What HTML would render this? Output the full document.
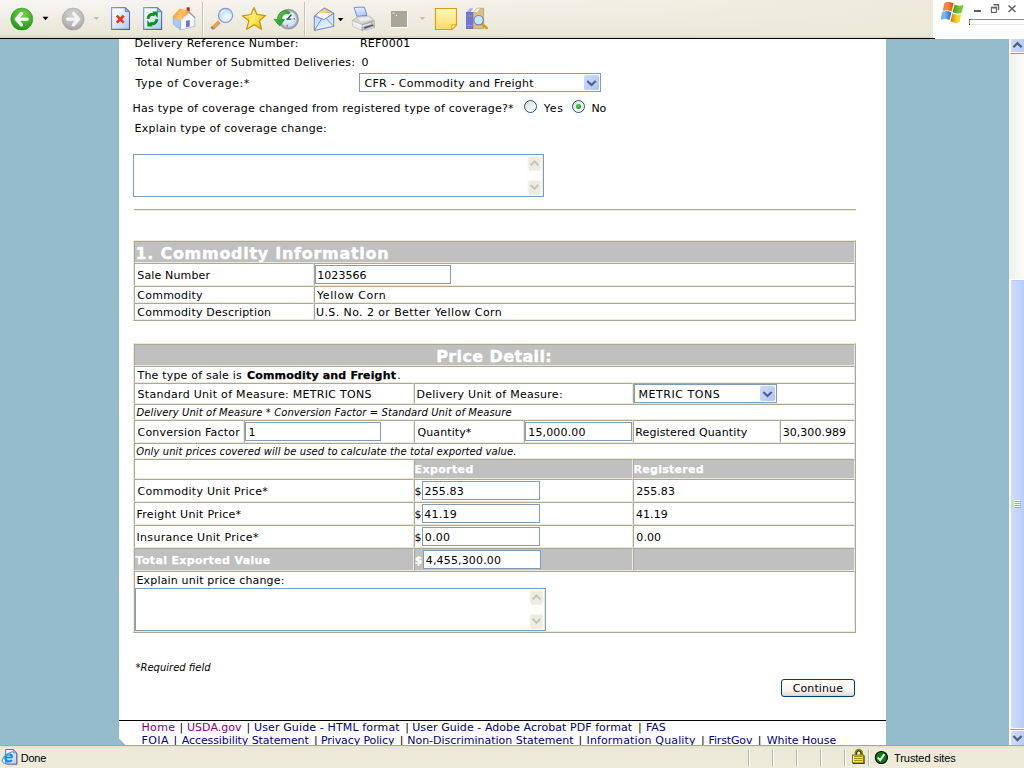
<!DOCTYPE html>
<html>
<head>
<meta charset="utf-8">
<title>Delivery</title>
<style>
html,body{margin:0;padding:0;width:1024px;height:768px;overflow:hidden;background:#93bbcc;}
body{position:relative;font-family:"DejaVu Sans","Liberation Sans",sans-serif;font-size:11px;color:#000;}
.abs{position:absolute;}
.t{position:absolute;white-space:pre;line-height:13px;height:13px;font:11px "DejaVu Sans","Liberation Sans",sans-serif;line-height:13px;}
.t.b{font-weight:bold;-webkit-text-stroke:0.25px;}
.t.h{font-weight:bold;font-size:16px;line-height:19px;height:19px;-webkit-text-stroke:0.4px #fff;}
.t.i{font-style:italic;font-size:10px;}
.t.s{font-family:"Liberation Sans","DejaVu Sans",sans-serif;}
#toolbar{left:0;top:0;width:933px;height:38px;background:linear-gradient(transparent 0,transparent 36px,#d9d5c1 37px,#d9d5c1 38px),linear-gradient(90deg,rgba(238,234,218,0) 0,rgba(238,234,218,0.35) 500px,rgba(238,234,218,0.95) 900px),linear-gradient(#f6f5f1 0,#f3f2ec 10px,#efede2 20px,#eae7d8 33px,#e4e0ce 37px);}
#tbline{left:0;top:38px;width:935px;height:1px;background:#000;}
#tbright{left:933px;top:0;width:91px;height:39px;background:#fff;}
#content{left:119px;top:39px;width:767px;height:706px;background:#fff;}
#status{left:0;top:745px;width:1024px;height:23px;background:linear-gradient(#a9a692 0,#a9a692 1px,#dedbc8 1px,#e8e5d4 2px,#ece9d8 4px,#eeebdb 100%);}
#sbar{left:1009px;top:39px;width:15px;height:706px;background:linear-gradient(90deg,#f1efe8,#fcfcf8);}
table.g{position:absolute;border-collapse:separate;border-spacing:0;border:1px solid;border-color:#ece9d8 #aca899 #aca899 #ece9d8;table-layout:fixed;}
table.g td{border:1px solid;border-color:#aca899 #ece9d8 #ece9d8 #aca899;padding:0;}
td.h{background:#c0c0c0;}
.in{position:absolute;box-sizing:border-box;border:1px solid #7f9db9;background:#fff;}
#btn{box-sizing:border-box;border:1px solid #003c74;border-radius:3px;background:linear-gradient(#fff,#f4f3ee 70%,#e4e1d6 90%,#d6d0c5);}
</style>
</head>
<body>
<div id="toolbar" class="abs"></div>
<div id="tbright" class="abs"></div>
<svg class="abs" style="left:0;top:0" width="1024" height="38" viewBox="0 0 1024 38">
<defs>
<radialGradient id="gG" cx="0.55" cy="0.3" r="0.75"><stop offset="0" stop-color="#7ed04f"/><stop offset="0.6" stop-color="#3fae2a"/><stop offset="1" stop-color="#1d8a1c"/></radialGradient>
<radialGradient id="gS" cx="0.5" cy="0.3" r="0.75"><stop offset="0" stop-color="#d2d2d2"/><stop offset="0.6" stop-color="#bcbcbc"/><stop offset="1" stop-color="#9c9c9c"/></radialGradient>
<linearGradient id="pg" x1="0" y1="0" x2="1" y2="1"><stop offset="0" stop-color="#ffffff"/><stop offset="0.35" stop-color="#eef5ff"/><stop offset="1" stop-color="#a4c8f6"/></linearGradient>
<linearGradient id="nt" x1="0" y1="0" x2="0" y2="1"><stop offset="0" stop-color="#fffcb8"/><stop offset="1" stop-color="#ffd868"/></linearGradient>
<linearGradient id="st" x1="0" y1="0" x2="1" y2="0.600"><stop offset="0" stop-color="#fff480"/><stop offset="0.350" stop-color="#f8d420"/><stop offset="0.550" stop-color="#fff070"/><stop offset="1" stop-color="#ecbc18"/></linearGradient>
<radialGradient id="ln" cx="0.620" cy="0.650" r="0.700"><stop offset="0" stop-color="#ffffff"/><stop offset="0.450" stop-color="#d4f0fe"/><stop offset="1" stop-color="#a8d8fa"/></radialGradient>
<linearGradient id="rf" x1="0" y1="0.3" x2="1" y2="0.7"><stop offset="0" stop-color="#f89030"/><stop offset="0.5" stop-color="#ffc468"/><stop offset="1" stop-color="#f08c28"/></linearGradient>
<linearGradient id="hw" x1="0" y1="0" x2="1" y2="1"><stop offset="0" stop-color="#d4e6f8"/><stop offset="0.5" stop-color="#ffffff"/><stop offset="1" stop-color="#e4ecf8"/></linearGradient>
<radialGradient id="cf" cx="0.4" cy="0.35" r="0.8"><stop offset="0" stop-color="#ffffff"/><stop offset="0.5" stop-color="#d4ecfa"/><stop offset="1" stop-color="#b0dcf6"/></radialGradient>
<linearGradient id="ga" x1="0" y1="0" x2="1" y2="1"><stop offset="0" stop-color="#70d058"/><stop offset="0.5" stop-color="#3cac30"/><stop offset="1" stop-color="#208c20"/></linearGradient>
<linearGradient id="ev" x1="0" y1="0" x2="0.300" y2="1"><stop offset="0" stop-color="#a8d8fc"/><stop offset="0.600" stop-color="#c4e6fd"/><stop offset="1" stop-color="#e8f4fe"/></linearGradient>
<linearGradient id="lt" x1="0" y1="0" x2="1" y2="0.200"><stop offset="0" stop-color="#fff0a0"/><stop offset="0.500" stop-color="#fcd070"/><stop offset="1" stop-color="#f8a850"/></linearGradient>
<linearGradient id="pp" x1="0" y1="0" x2="0.300" y2="1"><stop offset="0" stop-color="#f4f8ff"/><stop offset="1" stop-color="#a4ccf8"/></linearGradient>
<linearGradient id="pb" x1="0" y1="0" x2="1" y2="1"><stop offset="0" stop-color="#7c9cdc"/><stop offset="1" stop-color="#585898"/></linearGradient>
<linearGradient id="f1" x1="0" y1="0" x2="1" y2="0"><stop offset="0" stop-color="#f87830"/><stop offset="0.400" stop-color="#ff8c40"/><stop offset="1" stop-color="#e84410"/></linearGradient>
<linearGradient id="f2" x1="0" y1="0" x2="1" y2="0"><stop offset="0" stop-color="#4c9420"/><stop offset="0.600" stop-color="#78c830"/><stop offset="1" stop-color="#70cc20"/></linearGradient>
<linearGradient id="f3" x1="0" y1="0" x2="1" y2="0"><stop offset="0" stop-color="#60a8f0"/><stop offset="0.350" stop-color="#78c0fc"/><stop offset="1" stop-color="#2860b0"/></linearGradient>
<linearGradient id="f4" x1="0" y1="0" x2="1" y2="0"><stop offset="0" stop-color="#c47c08"/><stop offset="0.600" stop-color="#fcd028"/><stop offset="1" stop-color="#ffdc28"/></linearGradient>
</defs>
<!-- back -->
<circle cx="21.8" cy="19.1" r="11" fill="url(#gG)" stroke="#2a9a22" stroke-width="0.6"/>
<path d="M21.500 13.400L16.200 19.100L21.500 24.800M16.800 19.100H27.300" stroke="#fff" stroke-width="3.200" stroke-linecap="round" stroke-linejoin="round" fill="none"/>
<path d="M42.6 16.8h5.8l-2.9 3.4z" fill="#000"/>
<!-- forward -->
<circle cx="73.1" cy="19.1" r="11" fill="url(#gS)" stroke="#a6a6a6" stroke-width="0.6"/>
<path d="M73.400 13.400L78.700 19.100L73.400 24.800M78.100 19.100H67.600" stroke="#f4f4f4" stroke-width="3.200" stroke-linecap="round" stroke-linejoin="round" fill="none"/>
<path d="M93.6 16.9h5.6l-2.8 3.2z" fill="#c2bfb2"/>
<!-- stop -->
<path d="M111.600 7.600H125.300L129.500 11.800V29.400H111.600Z" fill="url(#pg)" stroke="url(#pb)" stroke-width="1.100"/>
<path d="M125.300 7.600V11.800H129.500Z" fill="#6cbcf8" stroke="#6870b4" stroke-width="0.700"/>
<path d="M116.8 15.6l7 7M123.8 15.6l-7 7" stroke="#f03818" stroke-width="2.7" stroke-linecap="butt"/>
<!-- refresh -->
<path d="M143.700 7.600H157.400L161.600 11.800V29.400H143.700Z" fill="url(#pg)" stroke="url(#pb)" stroke-width="1.100"/>
<path d="M157.400 7.600V11.800H161.600Z" fill="#6cbcf8" stroke="#6870b4" stroke-width="0.700"/>
<path d="M148.3 18.8a4.300 4.300 0 0 1 6.600-3.900" stroke="#0c9418" stroke-width="3" fill="none"/>
<path d="M152.200 11.500h5.500v6.500z" fill="#0c9418"/>
<path d="M156.700 19.200a4.300 4.300 0 0 1-6.600 3.900" stroke="#0c9418" stroke-width="3" fill="none"/>
<path d="M152.800 26.400h-5.500v-6.500z" fill="#0c9418"/>
<!-- home -->
<path d="M186.600 7.300h3v4.200h-3z" fill="#b42414"/>
<path d="M173.100 17.200l7.300 3.800v8.800l-7-5.600z" fill="#a4ccf2" stroke="#7c98d4" stroke-width="0.600"/>
<path d="M180.600 20.700l8.300-8l5.900 5.100v8.500l-13.900 3.600z" fill="url(#hw)" stroke="#9ca4d0" stroke-width="0.600"/>
<path d="M172.500 16.600l7.300-8.200l7.100 1.500l2.300 2.300l-10 8.500z" fill="url(#rf)"/>
<path d="M189 12l6.200 5.800" stroke="#a48c9c" stroke-width="1.100"/>
<path d="M186 20.800l3.800-0.900v6.600l-3.800 1z" fill="#7878b4"/>
<!-- sep -->
<path d="M202.5 2v34.5" stroke="#c8c5b4" stroke-width="1"/>
<path d="M203.5 2v34.5" stroke="#f8f7f0" stroke-width="1"/>
<!-- search -->
<path d="M219.500 22L212.300 28.800" stroke="#a098c8" stroke-width="3.600" stroke-linecap="butt"/>
<path d="M219.100 21.400L211.900 28.200" stroke="#f8a030" stroke-width="2.900" stroke-linecap="butt"/>
<path d="M212.800 27.300L211.500 28.600" stroke="#8c8478" stroke-width="2.900"/>
<circle cx="225.500" cy="15.400" r="7.100" fill="url(#ln)" stroke="#9094d4" stroke-width="1.200"/>
<path d="M221.300 12.600a5 5 0 0 1 3-2.300" stroke="#fff" stroke-width="1.300" fill="none" stroke-linecap="round"/>
<!-- star -->
<path d="M254 7.600L256.900 14.400L265.600 15.600L259.500 20.800L261.500 29.300L254.300 24.700L246.600 29.300L248.900 20.800L242.500 15.900L251.100 14.600Z" fill="url(#st)" stroke="#c8980c" stroke-width="1.300" stroke-linejoin="round"/>
<path d="M253.800 10.500L251.900 15.600L245.500 16.600" stroke="#fffbd0" stroke-width="1" fill="none" opacity="0.800"/>
<!-- history -->
<circle cx="288.500" cy="19.200" r="9.500" fill="#b4b4e0" stroke="#9c9ca0" stroke-width="1.800"/>
<circle cx="288.700" cy="19.200" r="7.600" fill="url(#cf)"/>
<path d="M287.600 19l3.800-4.400" stroke="#404040" stroke-width="1.400"/>
<path d="M286.400 19.200h5" stroke="#505050" stroke-width="1.300"/>
<rect x="293.700" y="18" width="1.300" height="1.800" fill="#f04820"/><rect x="286.600" y="24.800" width="1.300" height="1.800" fill="#f04820"/>
<path d="M290.100 12.400c-1.800-1.500-4.300-2-6.600-1.500c-3.700 0.900-6 4.300-6 8.500h-3.500l5.800 6.600l4.700-6.600h-3c0-2.400 1.100-4.400 3.400-5.300c1.300-0.500 2.700-0.500 4.100-0.200z" fill="url(#ga)" stroke="#1c8820" stroke-width="0.700" stroke-linejoin="round"/>
<!-- sep -->
<path d="M304.5 2v34.5" stroke="#c8c5b4" stroke-width="1"/>
<path d="M305.5 2v34.5" stroke="#f8f7f0" stroke-width="1"/>
<!-- mail -->
<path d="M314.300 16.100L324.500 8L333.700 13.300V26.300L314.300 30.500Z" fill="url(#ev)" stroke="#8484d0" stroke-width="1.100" stroke-linejoin="round"/>
<path d="M318.300 13L324.500 8.700L331.600 12.900L331.200 15.600L323.800 19.600L317.400 15.400Z" fill="url(#lt)"/>
<path d="M317.500 14.200L324 12.800L331.200 13.300L330.600 16L323.800 19.600L318 16Z" fill="#fffdf4"/>
<path d="M314.300 16.100L323.800 19.600L333.700 13.300" stroke="#8484d0" stroke-width="1" fill="none"/>
<path d="M314.500 30.300L321.600 18.900M326 18.300L333.600 26.200" stroke="#8484d0" stroke-width="1" fill="none"/>
<path d="M337.800 18h5.600l-2.800 3.300z" fill="#000"/>
<!-- print -->
<path d="M354.100 7.400L364.300 7.100L367.100 15.400L356.900 16.400Z" fill="url(#pp)" stroke="#8484d4" stroke-width="1" stroke-linejoin="round"/>
<path d="M352.300 20.600L357.200 17.100L369.900 16.100L374.100 20.600L362.100 24.500Z" fill="#d4d4d4" stroke="#acacac" stroke-width="0.600"/>
<path d="M357.600 17.700L369 16.800L371.800 19.700L360.600 21.600Z" fill="#ececec"/>
<path d="M352.300 20.600L362.100 24.500V30.500L352.700 26.300Z" fill="#ebebeb" stroke="#b4b4b4" stroke-width="0.600"/>
<path d="M362.100 24.500L374.100 20.600L374.500 27L362.100 30.500Z" fill="#b8b8b8" stroke="#a0a0a0" stroke-width="0.600"/>
<path d="M352.500 22.300L362.100 26.300L374.200 22.500" stroke="#f6f6f6" stroke-width="0.900" fill="none"/>
<path d="M364 27.200L372.600 24.400L373.600 25.600L364.600 28.700Z" fill="#50505c"/>
<path d="M365 29.400L373 26.500L374.700 27.300L366.600 30.300Z" fill="#e4ecfc" stroke="#8c94c8" stroke-width="0.400"/>
<rect x="370.900" y="22.500" width="1.500" height="1.100" fill="#48c848"/>
<!-- edit disabled -->
<rect x="391" y="11" width="16" height="16" fill="#aaa698"/>
<path d="M391.5 27.5h16v-16" stroke="#fff" stroke-width="1" fill="none"/>
<rect x="392.600" y="12.6" width="2" height="1" fill="#f4f4f0"/><rect x="396" y="15" width="1" height="1" fill="#f4f4f0"/>
<path d="M419.6 17.1h5.6l-2.8 3z" fill="#c2bfb2"/>
<!-- note -->
<path d="M435.5 8.5h21v16.4l-4.6 4.6h-16.4z" fill="url(#nt)" stroke="#d8a018" stroke-width="1.2"/>
<path d="M456.500 24.9h-4.6v4.6z" fill="#fff8c0" stroke="#d8a018" stroke-width="1"/>
<!-- research -->
<path d="M466.400 12.400l3.600-4.200h3.400l-3.400 4.200z" fill="#a8a8f0"/>
<rect x="466.300" y="12.300" width="6.600" height="16.400" fill="#7474d4" stroke="#5c5cb8" stroke-width="0.6"/>
<path d="M467 16h5.400M467 25.400h5.400" stroke="#9c9ce8" stroke-width="0.8"/>
<path d="M473.400 12.400l3.400-4.200h6.800v20.400h-10.200z" fill="#d8c080" stroke="#a89050" stroke-width="0.6"/>
<path d="M474 12l3-3.600h3l-3 3.600z" fill="#f4f4fc"/>
<path d="M482 24l4.600 4" stroke="#d8a018" stroke-width="2.800" stroke-linecap="round"/>
<circle cx="478.600" cy="20.200" r="4.700" fill="#c8e4f8" stroke="#7080c0" stroke-width="1.200"/>
<!-- windows flag -->
<path d="M944.600 2.600Q949 1.400 953.600 3.200L951.700 11.300Q947.200 9.400 942.800 10.600Z" fill="url(#f1)"/>
<path d="M954.500 4.600Q959 6.600 963.600 5L961.400 13Q957 14.300 952.600 11.900Z" fill="url(#f2)"/>
<path d="M942.400 11.500Q947 10.300 951.400 12.400L949.500 20.100Q945 18.300 940.600 19.600Z" fill="url(#f3)"/>
<path d="M952.300 13.400Q956.800 15.600 961.200 14.300L959.400 22.200Q955 23.600 950.400 21.200Z" fill="url(#f4)"/>
<!-- controls -->
<rect x="974" y="10" width="7" height="2" fill="#606060"/>
<path d="M993.500 4.700h5v5.600" stroke="#606060" stroke-width="1.400" fill="none"/>
<rect x="991.400" y="7.400" width="5" height="5" fill="#fff" stroke="#606060" stroke-width="1.100"/>
<path d="M991 7.700h6" stroke="#606060" stroke-width="1.600"/>
<path d="M1008.500 5.500l7 6.500M1015.500 5.500l-7 6.500" stroke="#606060" stroke-width="1.500"/>
<path d="M969.500 24.500v-5h55" stroke="#909090" stroke-width="1" fill="none"/>
<path d="M970 24.500h54" stroke="#e4e4e4" stroke-width="1"/>
<rect x="969" y="19" width="1" height="1" fill="#333"/><rect x="969" y="24" width="1" height="1" fill="#333"/>
</svg>

<div id="tbline" class="abs"></div>
<div id="content" class="abs"></div>
<svg class="abs" style="left:119px;top:738px" width="8" height="7" viewBox="0 0 8 7"><path d="M0 0.500L6.500 7H0z" fill="#93bbcc"/></svg>
<div id="sbar" class="abs"></div>
<svg class="abs" style="left:1009px;top:39px" width="15" height="706" viewBox="1009 39 15 706">
<defs><linearGradient id="th" x1="0" y1="0" x2="1" y2="0"><stop offset="0" stop-color="#cddafc"/><stop offset="0.5" stop-color="#c3d3fb"/><stop offset="1" stop-color="#b3c6f6"/></linearGradient></defs>
<rect x="1009" y="39" width="2" height="15" fill="#fdfdfa"/><rect x="1009" y="279" width="16" height="466" fill="#fdfdfa"/>
<rect x="1011" y="39" width="16" height="13" rx="1.500" fill="url(#th)"/>
<path d="M1010 52.500h15" stroke="#fff"/><path d="M1010.500 53.500h15" stroke="#7c9ce0"/>
<path d="M1013.400 47.200l4.100-4.100l4.100 4.100" stroke="#4d6185" stroke-width="2.300" fill="none"/>
<rect x="1011" y="280" width="16" height="448" rx="2" fill="url(#th)"/>
<path d="M1011.500 280.500h14" stroke="#b5c8f7" stroke-width="1"/>
<path d="M1014 500.500h6M1014 502.500h6M1014 504.500h6M1014 506.500h6" stroke="#f2f6ff" stroke-width="1"/>
<path d="M1015 501.500h6M1015 503.500h6M1015 505.500h6M1015 507.500h6" stroke="#8caaee" stroke-width="1"/>
<path d="M1010 728.500h15" stroke="#fff"/><path d="M1010.500 729.500h15" stroke="#7c9ce0"/><path d="M1010 730.500h15" stroke="#fff"/>
<rect x="1011" y="731" width="16" height="14" rx="1.500" fill="url(#th)"/>
<path d="M1013.400 736l4.100 4.100l4.100-4.100" stroke="#4d6185" stroke-width="2.300" fill="none"/>
</svg>

<div class="abs" style="left:134px;top:209px;width:722px;height:2px;border-top:1px solid #aca899;border-bottom:1px solid #ece9d8;box-sizing:border-box;"></div>
<table class="g" style="left:133px;top:240px;width:723px;">
<colgroup><col style="width:180px"><col></colgroup>
<tr style="height:22px"><td colspan="2" class="h"></td></tr>
<tr style="height:23px"><td></td><td></td></tr>
<tr style="height:17px"><td></td><td></td></tr>
<tr style="height:17px"><td></td><td></td></tr>
</table>
<table class="g" style="left:133px;top:343px;width:723px;">
<colgroup><col style="width:110px"><col style="width:170px"><col style="width:110px"><col style="width:109px"><col style="width:147px"><col style="width:75px"></colgroup>
<tr style="height:22px"><td colspan="6" class="h"></td></tr>
<tr style="height:17px"><td colspan="6"></td></tr>
<tr style="height:21px"><td colspan="2"></td><td colspan="2"></td><td colspan="2"></td></tr>
<tr style="height:16px"><td colspan="6"></td></tr>
<tr style="height:23px"><td></td><td></td><td></td><td></td><td></td><td></td></tr>
<tr style="height:16px"><td colspan="6"></td></tr>
<tr style="height:20px"><td colspan="2"></td><td colspan="2" class="h"></td><td colspan="2" class="h"></td></tr>
<tr style="height:23px"><td colspan="2"></td><td colspan="2"></td><td colspan="2"></td></tr>
<tr style="height:23px"><td colspan="2"></td><td colspan="2"></td><td colspan="2"></td></tr>
<tr style="height:23px"><td colspan="2"></td><td colspan="2"></td><td colspan="2"></td></tr>
<tr style="height:23px"><td colspan="2" class="h"></td><td colspan="2" class="h"></td><td colspan="2" class="h"></td></tr>
<tr style="height:61px"><td colspan="6"></td></tr>
</table>
<div class="in" style="left:359px;top:73px;width:242px;height:19px;"></div>
<div class="in" style="left:133px;top:154px;width:411px;height:43px;"></div>
<div class="in" style="left:315px;top:265px;width:136px;height:19px;"></div>
<div class="in" style="left:634px;top:384px;width:143px;height:19px;"></div>
<div class="in" style="left:245px;top:422px;width:136px;height:19px;"></div>
<div class="in" style="left:525px;top:422px;width:107px;height:19px;"></div>
<div class="in" style="left:422px;top:481px;width:118px;height:19px;"></div>
<div class="in" style="left:422px;top:504px;width:118px;height:19px;"></div>
<div class="in" style="left:422px;top:527px;width:118px;height:19px;"></div>
<div class="in" style="left:423px;top:550px;width:118px;height:19px;"></div>
<div class="in" style="left:135px;top:588px;width:411px;height:43px;"></div>
<div class="abs" id="btn" style="left:781px;top:679px;width:74px;height:18px;"></div>
<div class="abs" style="left:119px;top:720px;width:767px;height:1px;background:#000;"></div>
<svg class="abs" style="left:0;top:0;pointer-events:none" width="1024" height="768" viewBox="0 0 1024 768">
<defs>
<linearGradient id="bb" x1="0" y1="0" x2="1" y2="1"><stop offset="0" stop-color="#cfdcfd"/><stop offset="1" stop-color="#b0c3f3"/></linearGradient>
<linearGradient id="rb" x1="0" y1="0" x2="1" y2="1"><stop offset="0" stop-color="#d8d8ce"/><stop offset="0.6" stop-color="#f6f6f2"/><stop offset="1" stop-color="#ffffff"/></linearGradient>
<radialGradient id="gd" cx="0.4" cy="0.4" r="0.6"><stop offset="0" stop-color="#58d848"/><stop offset="1" stop-color="#1c9c1c"/></radialGradient>
</defs>
<rect x="584" y="75" width="15" height="15" rx="1.5" fill="url(#bb)"/><path d="M587.3 80.9l4.2 4.2l4.2 -4.2" stroke="#4d6185" stroke-width="2.1" fill="none"/><rect x="760" y="386" width="15" height="15" rx="1.5" fill="url(#bb)"/><path d="M763.3 391.9l4.2 4.2l4.2 -4.2" stroke="#4d6185" stroke-width="2.1" fill="none"/><circle cx="530.5" cy="106.5" r="6" fill="url(#rb)" stroke="#21558c" stroke-width="1"/><circle cx="578.5" cy="106.5" r="6" fill="url(#rb)" stroke="#21558c" stroke-width="1"/><circle cx="578.5" cy="106.5" r="2.5" fill="url(#gd)"/><rect x="526" y="155" width="17" height="41" fill="#fefefb"/><path d="M542.5 155.0v41" stroke="#eceadf" stroke-width="1"/><rect x="528.0" y="156.5" width="13" height="13" rx="2" fill="#edece3" stroke="#f7f6f0" stroke-width="1"/><path d="M529.0 170.0h11" stroke="#e4e2d4" stroke-width="1"/><rect x="528.0" y="180.5" width="13" height="13" rx="2" fill="#edece3" stroke="#f7f6f0" stroke-width="1"/><path d="M529.0 194.0h11" stroke="#e4e2d4" stroke-width="1"/><path d="M530.6 165.3l3.9 -3.9l3.9 3.9" stroke="#c6c4b6" stroke-width="2.0" fill="none"/><path d="M530.6 184.9l3.9 3.9l3.9 -3.9" stroke="#c6c4b6" stroke-width="2.0" fill="none"/><rect x="528" y="589" width="17" height="41" fill="#fefefb"/><path d="M544.5 589.0v41" stroke="#eceadf" stroke-width="1"/><rect x="530.0" y="590.5" width="13" height="13" rx="2" fill="#edece3" stroke="#f7f6f0" stroke-width="1"/><path d="M531.0 604.0h11" stroke="#e4e2d4" stroke-width="1"/><rect x="530.0" y="614.5" width="13" height="13" rx="2" fill="#edece3" stroke="#f7f6f0" stroke-width="1"/><path d="M531.0 628.0h11" stroke="#e4e2d4" stroke-width="1"/><path d="M532.6 599.4l3.9 -3.9l3.9 3.9" stroke="#c6c4b6" stroke-width="2.0" fill="none"/><path d="M532.6 618.8l3.9 3.9l3.9 -3.9" stroke="#c6c4b6" stroke-width="2.0" fill="none"/></svg>

<div class="t" style="left:134.5px;top:37px;letter-spacing:0.33px;">Delivery Reference Number:</div>
<div class="t" style="left:360px;top:37px;letter-spacing:0.217px;">REF0001</div>
<div class="t" style="left:135.5px;top:56px;letter-spacing:0.264px;">Total Number of Submitted Deliveries:</div>
<div class="t" style="left:361.5px;top:56px;letter-spacing:0px;">0</div>
<div class="t" style="left:135.5px;top:77px;letter-spacing:0.529px;">Type of Coverage:*</div>
<div class="t" style="left:364.5px;top:77px;letter-spacing:0.288px;">CFR - Commodity and Freight</div>
<div class="t" style="left:132.5px;top:102px;letter-spacing:0.258px;">Has type of coverage changed from registered type of coverage?*</div>
<div class="t" style="left:543.8px;top:102px;letter-spacing:0.75px;">Yes</div>
<div class="t" style="left:591.6px;top:102px;letter-spacing:-0.3px;">No</div>
<div class="t" style="left:134.5px;top:122px;letter-spacing:0.242px;">Explain type of coverage change:</div>
<div class="t h" style="left:135.5px;top:244px;letter-spacing:0.717px;color:#fff;">1. Commodity Information</div>
<div class="t" style="left:137.3px;top:269px;letter-spacing:0.15px;">Sale Number</div>
<div class="t" style="left:317.2px;top:269px;letter-spacing:0.067px;">1023566</div>
<div class="t" style="left:137.3px;top:289px;letter-spacing:0.237px;">Commodity</div>
<div class="t" style="left:317px;top:289px;letter-spacing:0.56px;">Yellow Corn</div>
<div class="t" style="left:137.3px;top:306px;letter-spacing:0.21px;">Commodity Description</div>
<div class="t" style="left:316px;top:306px;letter-spacing:0.4px;">U.S. No. 2 or Better Yellow Corn</div>
<div class="t h" style="left:436.2px;top:347px;letter-spacing:0.383px;color:#fff;">Price Detail:</div>
<div class="t" style="left:137.5px;top:369px;letter-spacing:0.194px;">The type of sale is</div>
<div class="t b" style="left:247px;top:369px;letter-spacing:0.175px;">Commodity and Freight</div>
<div class="t" style="left:397.3px;top:369px;letter-spacing:0px;">.</div>
<div class="t" style="left:137.5px;top:388px;letter-spacing:0.299px;">Standard Unit of Measure: METRIC TONS</div>
<div class="t" style="left:416.5px;top:388px;letter-spacing:0.271px;">Delivery Unit of Measure:</div>
<div class="t" style="left:638.5px;top:388px;letter-spacing:0.55px;">METRIC TONS</div>
<div class="t i" style="left:136.5px;top:406px;letter-spacing:0.093px;">Delivery Unit of Measure * Conversion Factor = Standard Unit of Measure</div>
<div class="t" style="left:137.5px;top:426px;letter-spacing:0.219px;">Conversion Factor</div>
<div class="t" style="left:248.5px;top:426px;letter-spacing:0px;">1</div>
<div class="t" style="left:417.5px;top:426px;letter-spacing:0.094px;">Quantity*</div>
<div class="t" style="left:528.25px;top:426px;letter-spacing:0.156px;">15,000.00</div>
<div class="t" style="left:635.25px;top:426px;letter-spacing:0.125px;">Registered Quantity</div>
<div class="t" style="left:782.75px;top:426px;letter-spacing:0.028px;">30,300.989</div>
<div class="t i" style="left:136.25px;top:445px;letter-spacing:0.083px;">Only unit prices covered will be used to calculate the total exported value.</div>
<div class="t b" style="left:414.5px;top:463px;letter-spacing:0.393px;color:#fff;">Exported</div>
<div class="t b" style="left:633.5px;top:463px;letter-spacing:0.278px;color:#fff;">Registered</div>
<div class="t" style="left:137.5px;top:485px;letter-spacing:0.25px;">Commodity Unit Price*</div>
<div class="t" style="left:136.5px;top:508px;letter-spacing:0.278px;">Freight Unit Price*</div>
<div class="t" style="left:136.5px;top:531px;letter-spacing:0.312px;">Insurance Unit Price*</div>
<div class="t" style="left:414.5px;top:485px;letter-spacing:0px;">$</div>
<div class="t" style="left:414.5px;top:508px;letter-spacing:0px;">$</div>
<div class="t" style="left:414.5px;top:531px;letter-spacing:0px;">$</div>
<div class="t b" style="left:414.7px;top:554px;letter-spacing:0px;color:#fff;">$</div>
<div class="t" style="left:424.5px;top:485px;letter-spacing:0.15px;">255.83</div>
<div class="t" style="left:424.3px;top:508px;letter-spacing:0.225px;">41.19</div>
<div class="t" style="left:424.8px;top:531px;letter-spacing:0.2px;">0.00</div>
<div class="t" style="left:425.75px;top:554px;letter-spacing:0.159px;">4,455,300.00</div>
<div class="t" style="left:636.3px;top:485px;letter-spacing:0.02px;">255.83</div>
<div class="t" style="left:636px;top:508px;letter-spacing:0.05px;">41.19</div>
<div class="t" style="left:636.3px;top:531px;letter-spacing:0.1px;">0.00</div>
<div class="t b" style="left:135.5px;top:554px;letter-spacing:0.342px;color:#fff;">Total Exported Value</div>
<div class="t" style="left:136.5px;top:574px;letter-spacing:0.17px;">Explain unit price change:</div>
<div class="t i" style="left:135.5px;top:661px;letter-spacing:0px;">*Required field</div>
<div class="t" style="left:792.7px;top:682px;letter-spacing:0.114px;">Continue</div>
<div class="t" style="left:141.5px;top:721px;letter-spacing:0.333px;color:#800080;">Home</div>
<div class="t" style="left:179.6px;top:721px;letter-spacing:0px;">|</div>
<div class="t" style="left:187px;top:721px;letter-spacing:0.036px;color:#800080;">USDA.gov</div>
<div class="t" style="left:246.6px;top:721px;letter-spacing:0px;">|</div>
<div class="t" style="left:254px;top:721px;letter-spacing:0.13px;color:#000080;">User Guide - HTML format</div>
<div class="t" style="left:405.2px;top:721px;letter-spacing:0px;">|</div>
<div class="t" style="left:412.25px;top:721px;letter-spacing:0.062px;color:#000080;">User Guide - Adobe Acrobat PDF format</div>
<div class="t" style="left:638px;top:721px;letter-spacing:0px;">|</div>
<div class="t" style="left:646px;top:721px;letter-spacing:0px;color:#000080;">FAS</div>
<div class="t" style="left:141.5px;top:734px;letter-spacing:0.417px;color:#000080;">FOIA</div>
<div class="t" style="left:173.4px;top:734px;letter-spacing:0px;">|</div>
<div class="t" style="left:181.75px;top:734px;letter-spacing:-0.091px;color:#000080;">Accessibility Statement</div>
<div class="t" style="left:314px;top:734px;letter-spacing:0px;">|</div>
<div class="t" style="left:321px;top:734px;letter-spacing:-0.115px;color:#000080;">Privacy Policy</div>
<div class="t" style="left:399.7px;top:734px;letter-spacing:0px;">|</div>
<div class="t" style="left:407.25px;top:734px;letter-spacing:-0.019px;color:#000080;">Non-Discrimination Statement</div>
<div class="t" style="left:578.5px;top:734px;letter-spacing:0px;">|</div>
<div class="t" style="left:586.5px;top:734px;letter-spacing:0.139px;color:#000080;">Information Quality</div>
<div class="t" style="left:701px;top:734px;letter-spacing:0px;">|</div>
<div class="t" style="left:708.5px;top:734px;letter-spacing:-0.143px;color:#000080;">FirstGov</div>
<div class="t" style="left:757.7px;top:734px;letter-spacing:0px;">|</div>
<div class="t" style="left:766.75px;top:734px;letter-spacing:-0.05px;color:#000080;">White House</div>
<div id="status" class="abs">
<svg class="abs" style="left:0;top:0" width="1024" height="23" viewBox="0 745 1024 23">
<defs><linearGradient id="ipg" x1="0" y1="0" x2="1" y2="1"><stop offset="0" stop-color="#ffffff"/><stop offset="0.500" stop-color="#e4e8fc"/><stop offset="1" stop-color="#b8ccf8"/></linearGradient></defs>
<g id="dv"><path d="M748.500 749v17" stroke="#bcb9a6"/><path d="M749.500 749v17" stroke="#fff"/></g>
<use href="#dv" x="24"/><use href="#dv" x="48"/><use href="#dv" x="72"/><use href="#dv" x="96"/><use href="#dv" x="120"/>
<!-- ie icon -->
<path d="M7 764.700h10.300v-11.500" stroke="#a4a49c" stroke-width="1" fill="none"/>
<path d="M5.600 749.500h7.600l3.400 3.400v11.100h-11z" fill="url(#ipg)" stroke="#6c6cb4" stroke-width="1"/>
<path d="M13.200 749.500v3.400h3.400z" fill="#a8c8f8" stroke="#6c6cb4" stroke-width="0.700"/>
<path d="M12.300 756.900a3.500 3.500 0 1 0 -0.500 2.900" fill="none" stroke="#1888e4" stroke-width="2.300"/>
<path d="M5.800 757.500h6.800" stroke="#1888e4" stroke-width="1.700"/>
<path d="M7.300 755.300a2.600 2.600 0 0 1 2.500-1.100" stroke="#7cd4fc" stroke-width="1" fill="none"/>
<path d="M2.500 762.300c-1.300-3 2.700-8.400 10-10.900" stroke="#38a4f0" stroke-width="1.100" fill="none"/>
<path d="M2.600 762.400c1 1.300 3.200 0.900 5.300-0.300" stroke="#38a4f0" stroke-width="1" fill="none"/>
<!-- lock -->
<path d="M855.800 755.500v-2.500a3 3 0 0 1 6 0v2.500" stroke="#8c8400" stroke-width="2.400" fill="none"/>
<path d="M856.600 755.500v-2.300a2.200 2.200 0 0 1 4.400 0v2.300" stroke="#181800" stroke-width="0.900" fill="none"/>
<rect x="853" y="755.500" width="11.500" height="8.500" fill="#000"/>
<rect x="852.500" y="755" width="11" height="8" fill="#f4ec10" stroke="#807800" stroke-width="1"/>
<path d="M854 756.500h8.500M854 758.500h8.500M854 760.500h8.500" stroke="#a09800" stroke-width="1"/>
<path d="M853.500 756v6" stroke="#fffff0" stroke-width="1"/>
<!-- check -->
<circle cx="881.400" cy="757.500" r="6" fill="#008400" stroke="#000" stroke-width="1.200"/>
<path d="M877.800 757.600l2.500 2.500l4-6" stroke="#fff" stroke-width="2" fill="none"/>
</svg>

</div>
<div class="t s" style="left:20.7px;top:752px;letter-spacing:-0.2px;">Done</div>
<div class="t s" style="left:894px;top:752px;letter-spacing:-0.058px;">Trusted sites</div>
</body>
</html>
